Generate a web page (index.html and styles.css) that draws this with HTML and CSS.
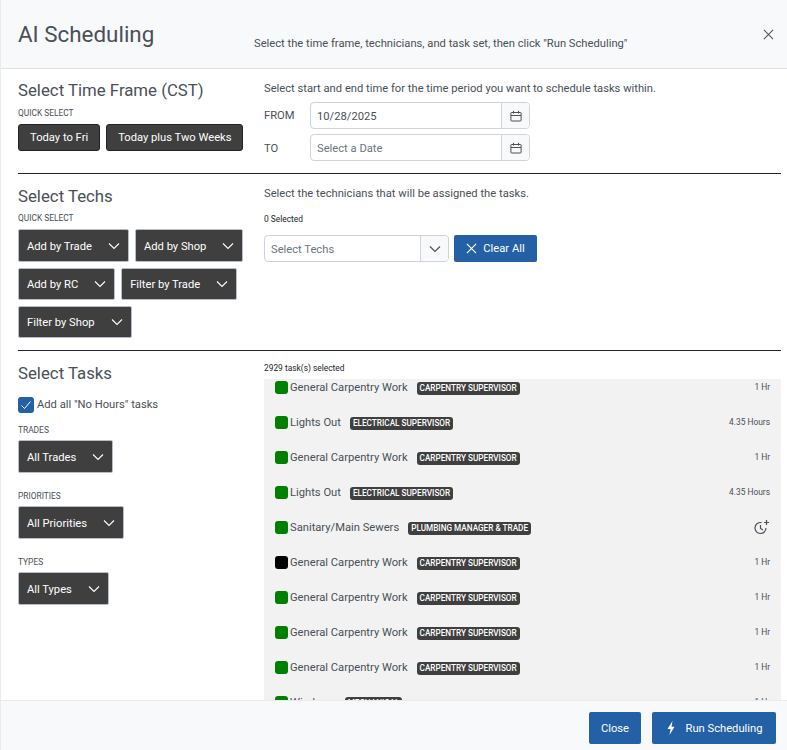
FILE: index.html
```html
<!DOCTYPE html>
<html lang="en">
<head>
<meta charset="utf-8">
<title>AI Scheduling</title>
<link rel="stylesheet" href="styles.css">
</head>
<body>
<svg class="defs" width="0" height="0" aria-hidden="true">
  <symbol id="chev" viewBox="0 0 14 14"><path d="M2 4.500l5 5 5-5" fill="none" stroke="currentColor" stroke-width="1.100"/></symbol>
  <symbol id="cal" viewBox="0 0 12 12"><path d="M1.500 2.500h9a.6.6 0 0 1 .6.6v7.300a.6.6 0 0 1-.6.6h-9a.6.6 0 0 1-.6-.6V3.100a.6.6 0 0 1 .6-.6zM.9 5.500h10.200M3.500.8v2.800M8.500.8v2.800" fill="none" stroke="currentColor" stroke-width="1"/></symbol>
</svg>
<div class="dialog">
  <header class="head">
    <h1>AI Scheduling</h1>
    <p class="head-note">Select the time frame, technicians, and task set, then click "Run Scheduling"</p>
    <svg class="close-x" viewBox="0 0 12 12" width="11" height="11"><path d="M1 1l10 10M11 1L1 11" stroke="currentColor" stroke-width="1.100" fill="none"/></svg>
  </header>
  <main class="body">
    <section class="sec sec-time">
      <div class="left">
        <h2>Select Time Frame (CST)</h2>
        <div class="label">QUICK SELECT</div>
        <div class="btns">
          <button class="dark solid">Today to Fri</button>
          <button class="dark solid">Today plus Two Weeks</button>
        </div>
      </div>
      <div class="right">
        <p class="note">Select start and end time for the time period you want to schedule tasks within.</p>
        <div class="date-row"><span class="date-label">FROM</span>
          <div class="date"><span class="val">10/28/2025</span><span class="addon"><svg width="12" height="12"><use href="#cal"/></svg></span></div></div>
        <div class="date-row"><span class="date-label">TO</span>
          <div class="date"><span class="val ph">Select a Date</span><span class="addon"><svg width="12" height="12"><use href="#cal"/></svg></span></div></div>
      </div>
    </section>
    <section class="sec sec-techs">
      <div class="left">
        <h2>Select Techs</h2>
        <div class="label">QUICK SELECT</div>
        <div class="btns wrap">
          <button class="dark drop">Add by Trade<svg width="14" height="14"><use href="#chev"/></svg></button>
          <button class="dark drop">Add by Shop<svg width="14" height="14"><use href="#chev"/></svg></button>
          <button class="dark drop">Add by RC<svg width="14" height="14"><use href="#chev"/></svg></button>
          <button class="dark drop">Filter by Trade<svg width="14" height="14"><use href="#chev"/></svg></button>
          <button class="dark drop">Filter by Shop<svg width="14" height="14"><use href="#chev"/></svg></button>
        </div>
      </div>
      <div class="right">
        <p class="note">Select the technicians that will be assigned the tasks.</p>
        <div class="tiny">0 Selected</div>
        <div class="tech-row">
          <div class="select"><span class="val ph">Select Techs</span><span class="addon"><svg width="14" height="14"><use href="#chev"/></svg></span></div>
          <button class="blue clear"><svg viewBox="0 0 12 12" width="11" height="11"><path d="M1 1l10 10M11 1L1 11" stroke="currentColor" stroke-width="1.300" fill="none"/></svg>Clear All</button>
        </div>
      </div>
    </section>
    <section class="sec-tasks">
      <div class="left">
        <h2>Select Tasks</h2>
        <label class="check"><span class="box"><svg viewBox="0 0 16 16" width="16" height="16"><path d="M3.500 8.500l3 3 6-7" fill="none" stroke="#fff" stroke-width="1"/></svg></span>Add all "No Hours" tasks</label>
        <div class="label l-trades">TRADES</div>
        <button class="dark drop">All Trades<svg width="14" height="14"><use href="#chev"/></svg></button>
        <div class="label l-next">PRIORITIES</div>
        <button class="dark drop">All Priorities<svg width="14" height="14"><use href="#chev"/></svg></button>
        <div class="label l-next">TYPES</div>
        <button class="dark drop">All Types<svg width="14" height="14"><use href="#chev"/></svg></button>
      </div>
      <div class="right tasks-col">
        <div class="tiny count">2929 task(s) selected</div>
        <div class="list">
          <div class="rows">
            <div class="row"><i class="dot"></i><span class="name">General Carpentry Work</span><span class="tag">CARPENTRY SUPERVISOR</span><span class="hrs">1 Hr</span></div>
            <div class="row"><i class="dot"></i><span class="name">Lights Out</span><span class="tag">ELECTRICAL SUPERVISOR</span><span class="hrs">4.35 Hours</span></div>
            <div class="row"><i class="dot"></i><span class="name">General Carpentry Work</span><span class="tag">CARPENTRY SUPERVISOR</span><span class="hrs">1 Hr</span></div>
            <div class="row"><i class="dot"></i><span class="name">Lights Out</span><span class="tag">ELECTRICAL SUPERVISOR</span><span class="hrs">4.35 Hours</span></div>
            <div class="row"><i class="dot"></i><span class="name">Sanitary/Main Sewers</span><span class="tag">PLUMBING MANAGER &amp; TRADE</span><span class="hrs"><svg class="clock" viewBox="0 0 16 16" width="16" height="16"><path d="M7.500 3.600A5.500 5.500 0 1 0 12 9M6.500 6v3.500L9 11M12.500 1v5M10 3.500h5" fill="none" stroke="currentColor" stroke-width="1.200"/></svg></span></div>
            <div class="row"><i class="dot black"></i><span class="name">General Carpentry Work</span><span class="tag">CARPENTRY SUPERVISOR</span><span class="hrs">1 Hr</span></div>
            <div class="row"><i class="dot"></i><span class="name">General Carpentry Work</span><span class="tag">CARPENTRY SUPERVISOR</span><span class="hrs">1 Hr</span></div>
            <div class="row"><i class="dot"></i><span class="name">General Carpentry Work</span><span class="tag">CARPENTRY SUPERVISOR</span><span class="hrs">1 Hr</span></div>
            <div class="row"><i class="dot"></i><span class="name">General Carpentry Work</span><span class="tag">CARPENTRY SUPERVISOR</span><span class="hrs">1 Hr</span></div>
            <div class="row"><i class="dot"></i><span class="name">Windows</span><span class="tag">MECHANICAL</span><span class="hrs">1 Hr</span></div>
          </div>
        </div>
      </div>
    </section>
  </main>
  <footer class="foot">
    <button class="blue">Close</button>
    <button class="blue run"><svg viewBox="0 0 10 14" width="10" height="14"><path d="M6.500 0L1.500 8h3L3.500 14l5-8.200h-3z" fill="currentColor"/></svg>Run Scheduling</button>
  </footer>
</div>
</body>
</html>
```
FILE: styles.css
```css
* { box-sizing: border-box; }
html, body { margin: 0; height: 100%; }
body { font-family: Roboto, "Liberation Sans", sans-serif; color: #495057; background: #fff; overflow: hidden; }
.defs { position: absolute; }
button { font-family: inherit; cursor: pointer; }

.dialog { display: flex; flex-direction: column; height: 750px; border-left: 1px solid #e9ecef; }

.head { height: 69px; flex: none; background: #f8f9fa; border-bottom: 1px solid #dee2e6; display: flex; padding: 0 12px 0 17px; position: relative; }
.head h1 { margin: 21px 0 0; font-size: 22.400px; line-height: 26px; font-weight: 400; color: #495057; width: 236px; flex: none; }
.head-note { margin: 37px 0 0; font-size: 11.200px; line-height: 14px; color: #495057; }
.close-x { position: absolute; right: 13px; top: 29px; color: #495057; }

.body { flex: 1; min-height: 0; overflow: hidden; padding: 0 6px 0 17px; }
.sec { display: flex; border-bottom: 1px solid #212529; }
.sec-time { height: 105px; padding-top: 10px; }
.sec-techs { height: 177px; padding-top: 11px; }
.sec-tasks { display: flex; padding-top: 11px; }
.left { width: 246px; flex: none; }
.right { flex: 1; min-width: 0; }

h2 { margin: 0; font-size: 16.800px; line-height: 22px; font-weight: 400; color: #495057; }
.label { font-size: 8.400px; line-height: 10px; color: #495057; margin-top: 7px; }
.sec-techs .label { margin-top: 6px; }
.btns { display: flex; gap: 6px; margin-top: 6px; }
.btns.wrap { flex-wrap: wrap; width: 238px; }

.dark { background: #3f3f3f; color: #fff; font-size: 11.200px; border: 1px solid #1f2226; border-radius: 3px; height: 27px; padding: 0 11px; }
.dark.solid { white-space: nowrap; }
.dark.solid:last-child { padding-right: 10px; }
.drop { display: inline-flex; align-items: center; justify-content: space-between; gap: 15px; height: 32px; padding: 0 7px 0 8px; border: 1px solid #b5bdc8; border-radius: 2px; }
.sec-techs .drop:nth-child(-n+2) { height: 33px; padding-top: 1px; }

.note { margin: 0; font-size: 11.200px; line-height: 16px; color: #495057; }
.sec-time .note { margin-top: 2px; }
.sec-techs .note { margin-top: 1px; }
.date-row { display: flex; align-items: center; margin-top: 5px; height: 27px; }
.date-label { width: 46px; font-size: 11.200px; }
.date-row:last-child .date-label { padding-top: 1px; }
.date { width: 220px; height: 100%; display: flex; border: 1px solid #ced4da; border-radius: 4px; background: #fff; overflow: hidden; }
.val { flex: 1; padding-left: 6px; padding-top: 1px; font-size: 11.200px; display: flex; align-items: center; color: #495057; }
.ph { color: #6c757d; }
.addon { width: 28px; flex: none; border-left: 1px solid #ced4da; background: #f8f9fa; display: flex; align-items: center; justify-content: center; color: #495057; }

.tiny { font-size: 8.400px; line-height: 10px; color: #212529; }
.sec-techs .tiny { margin-top: 12px; }
.tech-row { display: flex; gap: 5px; margin-top: 11px; }
.select { width: 185px; height: 27px; display: flex; border: 1px solid #ced4da; border-radius: 4px; overflow: hidden; }
.blue { background: #2360a5; color: #fff; border: 0; border-radius: 2px; font-size: 11.200px; }
.clear { width: 83px; height: 27px; display: inline-flex; align-items: center; justify-content: center; gap: 6px; }

.check { display: flex; align-items: center; gap: 3px; margin-top: 13px; font-size: 11.200px; line-height: 16px; }
.box { width: 16px; height: 16px; background: #2360a5; border-radius: 3px; display: block; }
.box svg { display: block; }
.sec-tasks .l-trades { margin-top: 12px; }
.sec-tasks .l-next { margin-top: 18px; }
.sec-tasks .drop { margin-top: 5px; height: 33px; padding-top: 1px; }

.tasks-col { display: flex; flex-direction: column; }
.count { margin-top: 1px; }
.list { margin-top: 6px; background: #f2f2f2; height: 321px; overflow: hidden; }
.rows { margin-top: -9px; }
.row { height: 35px; display: flex; align-items: center; padding: 0 11px; }
.dot { width: 13px; height: 13px; border-radius: 3px; background: #008000; flex: none; margin-right: 2px; margin-top: -1px; }
.dot.black { background: #000; }
.name { font-size: 11.200px; color: #495057; margin-right: 9px; margin-top: -1px; }
.tag { background: #3f3f3f; color: #fff; font-size: 8.200px; font-weight: 500; line-height: 13px; padding: 0 3px; border-radius: 3px; margin-top: 1px; }
.hrs { margin-left: auto; font-size: 8.400px; color: #495057; display: flex; margin-top: -1px; }
.clock { display: block; }

.foot { height: 50px; flex: none; background: #f8f9fa; border-top: 1px solid #e9ecef; display: flex; align-items: center; justify-content: flex-end; gap: 11px; padding: 9px 11px 4px 0; }
.foot .blue { height: 32px; }
.foot .blue:first-child { width: 52px; }
.run { width: 124px; display: inline-flex; align-items: center; justify-content: center; gap: 10px; }
```
